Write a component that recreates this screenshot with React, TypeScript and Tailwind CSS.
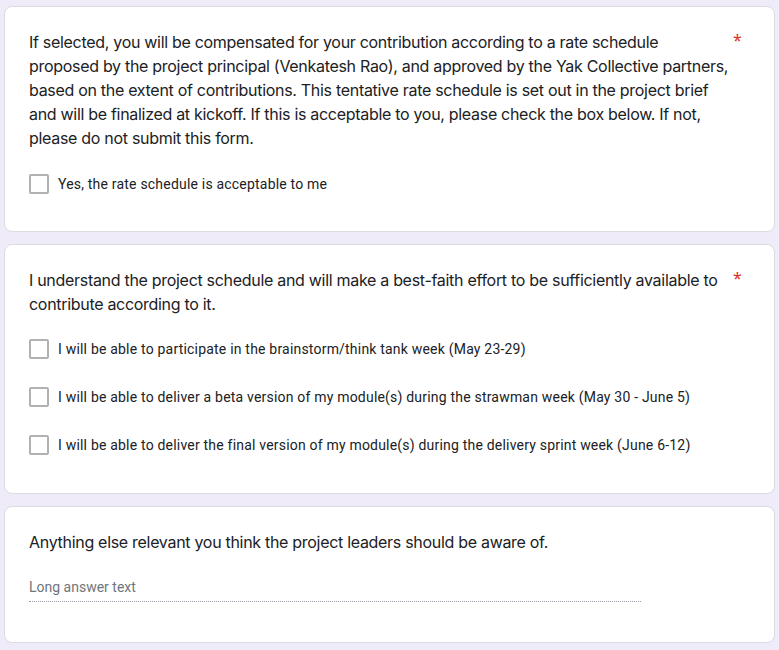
import React from 'react';

const questionFont = { fontFamily: 'Inter, "Noto Sans", sans-serif' };

const Checkbox: React.FC<{ label: string }> = ({ label }) => (
  <label className="flex items-center h-[48px] cursor-pointer">
    <span className="w-[20px] h-[20px] shrink-0 rounded-[2px] border-2 border-[#5f6368]/50" />
    <span className="ml-[9px] text-[14px] leading-[20px] text-[#202124] tracking-[0.2px]" style={{ fontFamily: 'Roboto, Arial, sans-serif' }}>
      {label}
    </span>
  </label>
);

const Card: React.FC<{ children: React.ReactNode; className?: string }> = ({ children, className }) => (
  <div className={`bg-white border border-[#dadce0] rounded-[8px] ${className ?? ''}`}>{children}</div>
);

const Question: React.FC<{ lines: string[]; required?: boolean }> = ({ lines, required }) => (
  <div className="flex">
    <div className="w-[700px] text-[16px] leading-[24px] text-[#202124] tracking-[-0.3px]" style={questionFont}>
      {lines.map((l, i) => (
        <div key={i} className="whitespace-nowrap">{l}</div>
      ))}
    </div>
    {required && <span className="ml-[4px] mt-[-2px] text-[#d93025] text-[16px]">*</span>}
  </div>
);

export default function App() {
  return (
    <div className="min-h-screen bg-[#f0ebf8] px-[4px] pt-[6px] pb-[8px] flex flex-col gap-[12px]">
      <Card className="pl-[24px] pr-[24px] pt-[23px] h-[226px]">
        <Question
          required
          lines={[
            'If selected, you will be compensated for your contribution according to a rate schedule',
            'proposed by the project principal (Venkatesh Rao), and approved by the Yak Collective partners,',
            'based on the extent of contributions. This tentative rate schedule is set out in the project brief',
            'and will be finalized at kickoff. If this is acceptable to you, please check the box below. If not,',
            'please do not submit this form.',
          ]}
        />
        <div className="mt-[10px]">
          <Checkbox label="Yes, the rate schedule is acceptable to me" />
        </div>
      </Card>

      <Card className="pl-[24px] pr-[24px] pt-[23px] h-[250px]">
        <Question
          required
          lines={[
            'I understand the project schedule and will make a best-faith effort to be sufficiently available to',
            'contribute according to it.',
          ]}
        />
        <div className="mt-[9px]">
          <Checkbox label="I will be able to participate in the brainstorm/think tank week (May 23-29)" />
          <Checkbox label="I will be able to deliver a beta version of my module(s) during the strawman week (May 30 - June 5)" />
          <Checkbox label="I will be able to deliver the final version of my module(s) during the delivery sprint week (June 6-12)" />
        </div>
      </Card>

      <Card className="pl-[24px] pr-[24px] pt-[23px] h-[137px]">
        <Question lines={['Anything else relevant you think the project leaders should be aware of.']} />
        <div className="mt-[20px] w-[612px] border-b border-dotted border-[#9aa0a6] pb-[3px]">
          <span className="text-[14px] leading-[20px] text-[#70757a]" style={{ fontFamily: 'Roboto, Arial, sans-serif' }}>
            Long answer text
          </span>
        </div>
      </Card>
    </div>
  );
}
